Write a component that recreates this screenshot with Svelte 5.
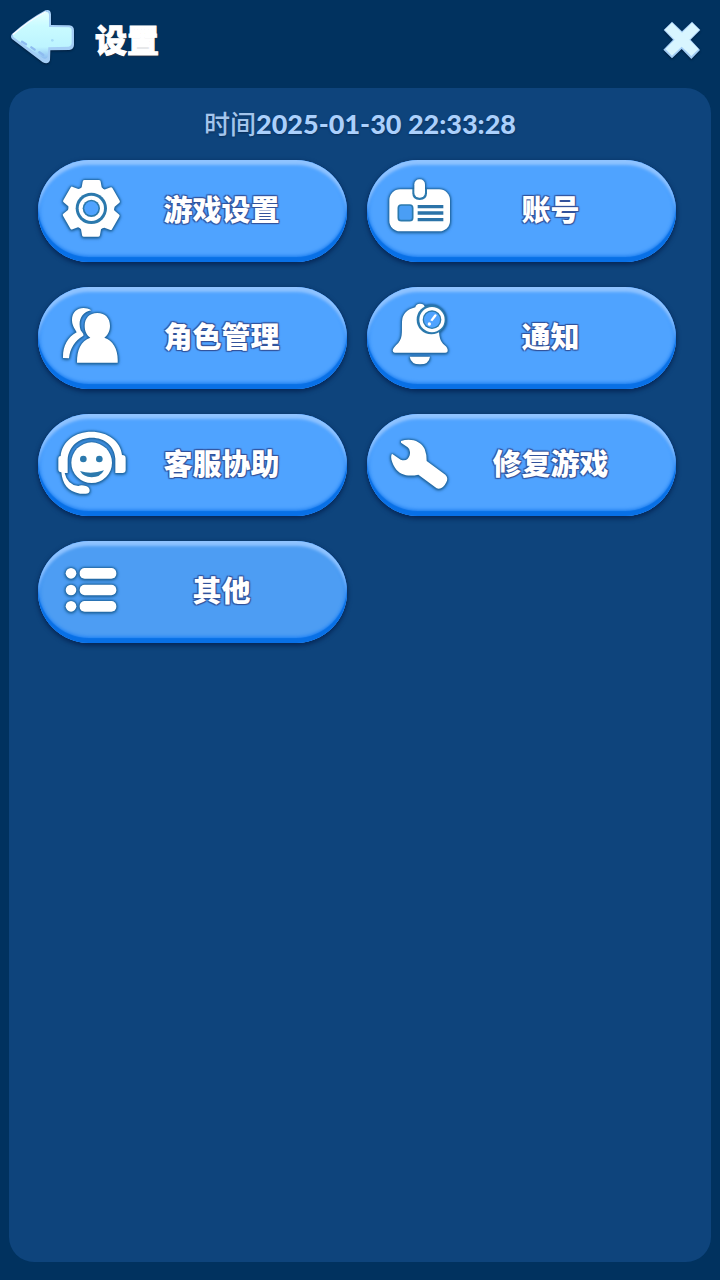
<script>
    let title = '设置'
    let time = '2025-01-30 22:33:28'

    let items = [
        { icon: 'gear', label: '游戏设置', box: '75 66 216 216' },
        { icon: 'card', label: '账号', box: '72 66 216 216' },
        { icon: 'role', label: '角色管理', box: '75 57 216 216' },
        { icon: 'bell', label: '通知', box: '72 57 216 216' },
        { icon: 'help', label: '客服协助', box: '75 63 216 216' },
        { icon: 'wrench', label: '修复游戏', box: '72 63 216 216' },
        { icon: 'list', label: '其他', box: '75 63 216 216', dim: true },
    ]
</script>

<div class="screen">
    <header>
        <button class="back" aria-label="返回">
            <svg viewBox="30 30 195 186" width="65" height="62">
                <defs>
                    <linearGradient id="ice" x1="0" y1="0" x2="0" y2="1">
                        <stop offset="0" stop-color="#e4ffff" />
                        <stop offset="0.3" stop-color="#c9fbff" />
                        <stop offset="0.75" stop-color="#bdf4ff" />
                        <stop offset="1" stop-color="#8cbcf0" />
                    </linearGradient>
                </defs>
                <path
                    class="edge"
                    d="M36 105 Q84 62 136 34 Q152 29 153 46 L153 78 L208 79 Q222 80 222 94 L222 138 Q221 152 208 153 L151 154 L150 184 Q145 198 128 190 L36 120 Q30 113 36 105Z"
                />
                <path
                    fill="url(#ice)"
                    d="M40 107 Q86 67 136 40 Q146 36 147 48 L147 84 L206 85 Q215 86 215 94 L215 133 Q214 142 205 143 L145 145 L143 174 Q138 182 128 177 L41 115 Q37 111 40 107Z"
                />
                <path
                    d="M66 128 L78 136 M94 145 L104 152 M118 160 L130 168"
                    fill="none"
                    stroke="#8fbcf0"
                    stroke-width="7"
                    stroke-linecap="round"
                />
                <path
                    d="M40 106 Q86 65 136 39"
                    fill="none"
                    stroke="#fff"
                    stroke-width="4"
                    stroke-linecap="round"
                />
                <circle cx="157" cy="124" r="4" fill="#a5dcf8" />
            </svg>
        </button>
        <h1>{title}</h1>
        <button class="close" aria-label="关闭">
            <svg viewBox="190 65 114 114" width="38" height="38">
                <path
                    class="edge"
                    d="M217 67 L247 96 L277 67 L302 92 L273 121 L301 152 L275 179 L246 149 L217 177 L191 151 L220 121 L192 92Z"
                />
                <path
                    d="M217 70 L247 100 L277 70 L299 91 L269 121 L297 149 L275 170 L246 142 L217 169 L197 149 L225 121 L195 91Z"
                    fill="#d8f5ff"
                />
            </svg>
        </button>
    </header>

    <main>
        <p class="time">时间<b>{time}</b></p>

        <div class="grid">
            {#each items as item}
                <button class="item" class:dim={item.dim}>
                    <svg class="icon" viewBox={item.box} width="72" height="72">
                        {#if item.icon === 'gear'}
                            {#each [0, 60, 120, 180, 240, 300] as angle}
                                <path
                                    d="M163 90 H207 Q212 90 212 95 L215 112 L225 122 H145 L155 112 L158 95 Q158 90 163 90Z"
                                    transform="rotate({angle} 184 175)"
                                />
                            {/each}
                            <circle cx="184" cy="175" r="65" />
                            <circle class="ink" cx="184" cy="175" r="47" />
                            <circle cx="184" cy="175" r="38" />
                            <circle class="ink" cx="184" cy="175" r="26" />
                            <circle class="sky" cx="184" cy="175" r="21" />
                        {:else if item.icon === 'card'}
                            <rect x="88" y="118" width="182" height="126" rx="32" />
                            <path class="ink" d="M157 117 H201 V130 Q201 150 179 150 Q157 150 157 130Z" />
                            <rect x="163" y="88" width="32" height="55" rx="15" />
                            <rect class="photo" x="115" y="165" width="43" height="47" rx="9" />
                            <path class="line" d="M173 170 H250 M173 189 H250 M173 209 H250" />
                        {:else if item.icon === 'role'}
                            <path
                                d="M184 91 C158 74 124 88 126 122 C127 140 138 150 140 157 C112 172 98 200 99 234 L117 235 C120 205 134 182 160 167 C162 161 156 158 152 151 C143 126 153 96 184 91Z"
                            />
                            <path
                                d="M202 99 C226 99 240 115 240 137 C240 154 232 166 223 173 C250 182 265 208 263 248 H141 C141 209 152 183 181 173 C171 166 164 154 164 137 C164 115 178 99 202 99Z"
                            />
                        {:else if item.icon === 'bell'}
                            <path
                                d="M166 82 Q168 71 180 71 Q194 71 195 84 Q236 93 237 135 C236 170 240 184 254 196 Q264 204 263 213 Q263 218 256 218 H104 Q98 218 98 211 Q99 205 108 196 C130 176 125 160 126 126 Q127 91 166 82Z"
                            />
                            <path d="M149 230 H210 Q207 253 180 253 Q153 253 149 230Z" />
                            <circle class="ink" cx="214" cy="119" r="44" />
                            <circle cx="216" cy="119" r="38" />
                            <circle class="ink" cx="216" cy="119" r="28" />
                            <circle class="sky" cx="216" cy="119" r="24" />
                            <path d="M223 104 Q229 101 230 107 L217 124 L211 121Z" />
                            <circle cx="208" cy="132" r="5" />
                        {:else if item.icon === 'help'}
                            <path
                                d="M92 153 C96 108 137 80 184 80 C232 80 272 108 276 150 Q287 150 287 160 V195 Q287 204 277 204 H256 V161 C254 123 224 98 185 98 C145 98 116 125 113 163 V204 H104 Q112 240 145 243 Q153 238 168 243 Q179 247 179 257 Q178 267 165 266 H150 C113 260 97 236 94 202 Q85 202 85 193 V160 Q85 153 92 153Z"
                            />
                            <circle cx="185" cy="173" r="61" />
                            <circle class="ink" cx="160" cy="162" r="10" />
                            <circle class="ink" cx="208" cy="162" r="10" />
                            <path class="ink" d="M150 198 Q184 209 222 196 Q211 217 185 217 Q160 216 150 198Z" />
                        {:else if item.icon === 'wrench'}
                            <path
                                d="M123 108 C151 98 183 107 194 132 Q200 147 200 168 L256 209 Q266 218 259 232 Q248 255 230 250 L175 209 C145 216 119 210 105 188 C95 172 90 155 96 146 L122 164 Q143 171 149 151 Q153 134 143 127 L123 113Z"
                            />
                        {:else}
                            {#each [124, 174, 223] as y}
                                <circle cx="123" cy={y} r="16" />
                                <rect x="149" y={y - 16} width="110" height="32" rx="15" />
                            {/each}
                        {/if}
                    </svg>
                    <span>{item.label}</span>
                </button>
            {/each}
        </div>
    </main>
</div>

<style>
    :global(body) {
        background-color: #01325f;
    }
    .screen {
        display: flex;
        flex-direction: column;
        min-height: 100vh;
        box-sizing: border-box;
        padding: 0 9px 18px;
        font-family: Lato, 'Noto Sans CJK SC', sans-serif;
    }
    header {
        display: flex;
        align-items: center;
        height: 80px;
        padding: 0 10px 8px 1px;
    }
    h1 {
        flex: 1;
        margin: 0 0 0 20px;
        font-size: 32px;
        line-height: 40px;
        font-weight: 900;
        color: #fff;
        -webkit-text-stroke: 1px #fff;
        text-shadow: 0 1px 2px #3a2c2c;
    }
    button {
        display: flex;
        align-items: center;
        margin: 0;
        padding: 0;
        border: none;
        background: none;
        font-family: inherit;
        cursor: pointer;
    }
    svg {
        display: block;
        flex: none;
    }
    .back,
    .close {
        filter: drop-shadow(0 1px 1px #001c3a);
    }
    .edge {
        fill: #a3cdf5;
    }
    main {
        flex: 1;
        padding: 18px 35px 18px 29px;
        border-radius: 25px;
        background-color: #0e447c;
    }
    .time {
        margin: 0 -6px 18px 0;
        text-align: center;
        font-size: 26px;
        line-height: 36px;
        font-weight: 500;
        color: #a3c5ec;
        text-shadow: 0 1px 2px #0a2c55;
    }
    .time b {
        font-size: 27px;
        font-weight: 900;
        color: #abd0fc;
    }
    .grid {
        display: grid;
        grid-template-columns: 1fr 1fr;
        gap: 25px 20px;
    }
    .item {
        height: 102px;
        padding: 0 31px 6px 17px;
        border-radius: 51px;
        background-color: #4fa3ff;
        box-shadow:
            inset 0 -5px 1px #0870e6,
            inset 0 -7px 3px #2d8af5,
            inset 0 5px 3px #8fc3ff,
            inset 0 0 4px 1px #2480ee,
            0 2px 4px 1px #06295a;
    }
    .item:active,
    .dim {
        background-color: #4d9df3;
    }
    .item span {
        flex: 1;
        padding-top: 4px;
        text-align: center;
        font-size: 29px;
        line-height: 40px;
        font-weight: 900;
        color: #fff;
        text-shadow:
            1px 1px 1px #32539c,
            -1px 1px 1px #32539c,
            1px -1px 1px #32539c,
            -1px -1px 1px #32539c;
    }
    .icon {
        fill: #fff;
        overflow: visible;
        filter: drop-shadow(0 0 1px #1d659f) drop-shadow(0 0 1px #1d659f) drop-shadow(0 1px 1px #2a6fae);
    }
    .ink {
        fill: #2b79ad;
    }
    .sky {
        fill: #4fa3ff;
    }
    .photo {
        fill: #4a9ef5;
        stroke: #2b79ad;
        stroke-width: 5;
    }
    .line {
        stroke: #2b73a8;
        stroke-width: 10;
    }
</style>
